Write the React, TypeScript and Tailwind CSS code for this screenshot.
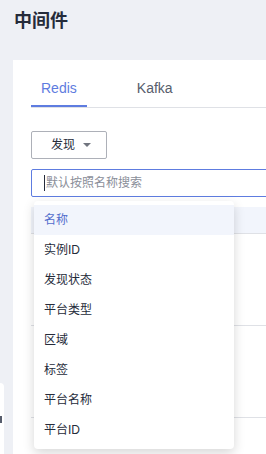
import React from "react";

const fields = ["名称", "实例ID", "发现状态", "平台类型", "区域", "标签", "平台名称", "平台ID"];

const Caret: React.FC = () => (
  <svg width="8" height="4" viewBox="0 0 8 4" className="text-[#71757f]">
    <path d="M0 0 L8 0 L4 4 Z" fill="currentColor" />
  </svg>
);

export default function App() {
  const [tab, setTab] = React.useState("Redis");
  const [active, setActive] = React.useState(0);

  return (
    <div className="relative w-[266px] h-[454px] overflow-hidden bg-[#eef0f5] font-['Liberation_Sans','Noto_Sans_CJK_SC',sans-serif] text-[#252b3a]">
      <div className="pt-[8px] pl-[14px] text-[18px] leading-[26px] font-bold">中间件</div>

      <div className="mt-[26px] ml-[13px] w-[300px] h-[400px] bg-white px-[18px] pt-[18px]">
        {/* tabs */}
        <div className="flex gap-[40px] border-b border-[#dfe1e6]">
          {["Redis", "Kafka"].map((t) => (
            <button
              key={t}
              type="button"
              onClick={() => setTab(t)}
              className={
                "px-[10px] pb-[7px] text-[14px] leading-[20px] border-b-2 " +
                (tab === t ? "text-[#5e7ce0] border-[#5e7ce0]" : "text-[#575d6c] border-transparent")
              }
            >
              {t}
            </button>
          ))}
        </div>

        <button
          type="button"
          className="mt-[23px] flex items-center gap-[8px] w-[76px] h-[28px] pl-[19px] border border-[#adb0b8] rounded-[2px] text-[12px] text-[#252b3a]"
        >
          <span>发现</span>
          <Caret />
        </button>

        <div className="mt-[10px] flex items-center h-[28px] border border-[#5e7ce0] rounded-[2px] pl-[12px] text-[12px]">
          <span className="w-px h-[16px] bg-[#252b3a]" />
          <span className="ml-px text-[#8a8e99]">默认按照名称搜索</span>
        </div>

        {/* table behind the menu */}
        <div className="mt-[10px]">
          <div className="h-[27px] bg-[#f2f5fc] border-b border-[#dfe1e6]" />
          <div className="h-[92px] border-b border-[#dfe1e6]" />
          <div className="h-[92px] border-b border-[#dfe1e6]" />
        </div>
      </div>

      {/* dropdown menu */}
      <div className="absolute left-[34px] top-[201px] w-[200px] py-[4px] bg-white rounded-[4px] shadow-[0_4px_12px_rgba(0,0,0,0.16)]">
        {fields.map((f, i) => (
          <div
            key={f}
            onMouseEnter={() => setActive(i)}
            className={
              "h-[30px] pl-[10px] text-[12px] leading-[30px] cursor-pointer " +
              (i === active ? "bg-[#f2f5fc] text-[#526ecc]" : "text-[#252b3a]")
            }
          >
            {f}
          </div>
        ))}
      </div>

      {/* side handle */}
      <div className="absolute left-0 top-[383px] w-[4px] h-[80px] bg-white rounded-tr-[4px]">
        <div className="mt-[33px] w-[2px] h-[7px] bg-[#575d6c]" />
      </div>
    </div>
  );
}
